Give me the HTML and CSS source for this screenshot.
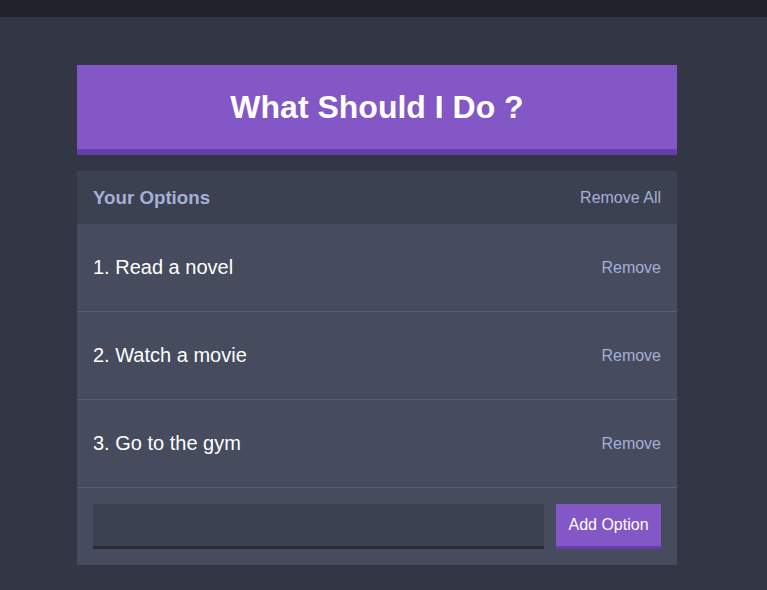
FILE: index.html
```html
<!DOCTYPE html>
<html lang="en">
<head>
<meta charset="utf-8">
<title>Indecision</title>
<link rel="stylesheet" href="styles.css">
</head>
<body>
<div class="topbar"></div>
<main class="container">
  <button class="big-button">What Should I Do ?</button>
  <section class="widget">
    <div class="widget-header">
      <h3 class="widget-header__title">Your Options</h3>
      <button class="link-button">Remove All</button>
    </div>
    <div class="option">
      <p class="option__text">1. Read a novel</p>
      <button class="link-button">Remove</button>
    </div>
    <div class="option">
      <p class="option__text">2. Watch a movie</p>
      <button class="link-button">Remove</button>
    </div>
    <div class="option">
      <p class="option__text">3. Go to the gym</p>
      <button class="link-button">Remove</button>
    </div>
    <form class="add-option">
      <input class="add-option__input" type="text" name="option">
      <button class="button" type="button">Add Option</button>
    </form>
  </section>
</main>
</body>
</html>
```

FILE: styles.css
```css
* { box-sizing: border-box; }
html, body { margin: 0; padding: 0; }
body {
  background: #333745;
  font-family: "Liberation Sans", Arial, sans-serif;
  color: #ffffff;
  min-height: 590px;
}
.topbar {
  height: 17px;
  background: #20222b;
}
.container {
  width: 600px;
  margin: 48px 0 0 77px;
}
.big-button {
  display: block;
  width: 100%;
  height: 90px;
  background: #8357c5;
  border: none;
  border-bottom: 6px solid #693cad;
  color: #ffffff;
  font-family: inherit;
  font-weight: bold;
  font-size: 32px;
  padding: 0;
  margin: 0 0 16px;
}
.widget {
  background: #464b5e;
}
.widget-header {
  display: flex;
  align-items: center;
  justify-content: space-between;
  height: 53px;
  padding: 0 16px;
  background: #3c4151;
}
.widget-header__title {
  margin: 0;
  font-size: 18.72px;
  color: #a5afd7;
  font-weight: bold;
}
.link-button {
  background: none;
  border: none;
  padding: 0;
  color: #a5afd7;
  font-family: inherit;
  font-size: 16px;
}
.option {
  display: flex;
  align-items: center;
  justify-content: space-between;
  height: 88px;
  padding: 0 16px;
  border-bottom: 1px solid #5a5f74;
}
.option__text {
  margin: 0;
  font-size: 20px;
  color: #ffffff;
}
.add-option {
  display: flex;
  gap: 12px;
  padding: 16px;
}
.add-option__input {
  flex: 1;
  height: 45px;
  background: #3c4151;
  border: none;
  border-bottom: 3px solid #2a2c37;
  color: #a5afd7;
  font-family: inherit;
  font-size: 16px;
  padding: 0 12px;
  outline: none;
}
.button {
  width: 105px;
  height: 45px;
  background: #8357c5;
  border: none;
  border-bottom: 3px solid #693cad;
  color: #ffffff;
  font-family: inherit;
  font-size: 16px;
  padding: 0;
}
```
